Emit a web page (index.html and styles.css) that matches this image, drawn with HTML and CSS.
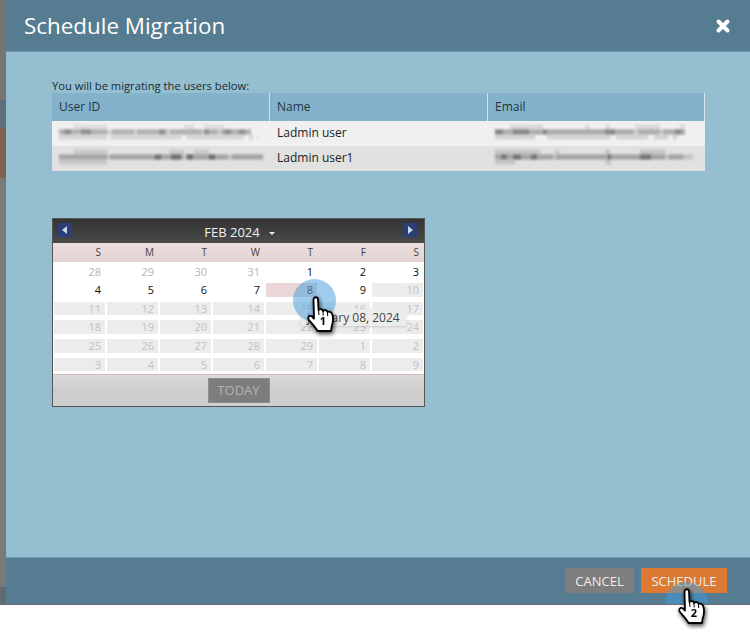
FILE: index.html
```html
<!DOCTYPE html>
<html lang="en">
<head>
  <meta charset="UTF-8" />
  <title>Schedule Migration</title>
  <link rel="stylesheet" href="styles.css">
</head>
<body>
  <div class="screen">

    <!-- Sliver of the page behind the modal -->
    <div class="behind">
      <div class="behind-a"></div>
      <div class="behind-b"></div>
      <div class="behind-c"></div>
      <div class="behind-d"></div>
      <div class="behind-e"></div>
    </div>

    <div class="dialog">
      <header class="dialog-head">
        <h1>Schedule Migration</h1>
        <svg class="close" width="16" height="16" viewBox="0 0 16 16">
          <path d="M3.5 3.5 L12.5 12.5 M12.5 3.5 L3.5 12.5" stroke="#fff" stroke-width="4" stroke-linecap="round"/>
        </svg>
      </header>

      <main class="dialog-body">
        <p class="intro">You will be migrating the users below:</p>

        <div class="users">
          <div class="users-head">User ID</div>
          <div class="users-head">Name</div>
          <div class="users-head">Email</div>

          <div class="users-cell odd">
            <svg class="mosaic" width="205" height="18" viewBox="0 0 205 18">
              <path d="M15 3H48M125 3H135M145 3H165" stroke="#dcdcdc" stroke-width="5"/>
              <path d="M0 8H192" stroke="#cfcfcf" stroke-width="5"/>
              <path d="M0 8H192" stroke="#b0b0b0" stroke-width="5" stroke-dasharray="48 5 22 3 30 3 32 4 12 3 30"/>
              <path d="M5 8H12M22 8H32M100 8H106M145 8H150M165 8H172M180 8H186" stroke="#8f8f8f" stroke-width="5"/>
              <path d="M0 13H200" stroke="#d6d6d6" stroke-width="5" stroke-dasharray="48 3 72 4 58 5 4 5 5"/>
            </svg>
          </div>
          <div class="users-cell odd">Ladmin user</div>
          <div class="users-cell odd">
            <svg class="mosaic" width="205" height="18" viewBox="0 0 205 18">
              <path d="M15 3H48M90 3H95M110 3H115M140 3H165M185 3H190" stroke="#d8d8d8" stroke-width="5"/>
              <path d="M0 8H190" stroke="#cccccc" stroke-width="5"/>
              <path d="M0 8H190" stroke="#acacac" stroke-width="5" stroke-dasharray="48 3 60 3 25 4 22 3 25"/>
              <path d="M0 8H8M18 8H34M48 8H52M110 8H120M180 8H186" stroke="#888" stroke-width="5"/>
              <path d="M0 13H205" stroke="#d2d2d2" stroke-width="5" stroke-dasharray="40 12 64 5 32 6 14 5 4"/>
            </svg>
          </div>

          <div class="users-cell even">
            <svg class="mosaic" width="205" height="18" viewBox="0 0 205 18">
              <path d="M15 3H48M110 3H125M135 3H150" stroke="#cacaca" stroke-width="5"/>
              <path d="M0 8H207" stroke="#c4c4c4" stroke-width="5"/>
              <path d="M0 8H207" stroke="#a4a4a4" stroke-width="5" stroke-dasharray="48 3 46 3 24 3 42 4 30"/>
              <path d="M96 8H102M112 8H122M128 8H134M150 8H156" stroke="#6f6f6f" stroke-width="5"/>
              <path d="M0 13H48" stroke="#c6c6c6" stroke-width="5"/>
            </svg>
          </div>
          <div class="users-cell even">Ladmin user1</div>
          <div class="users-cell even">
            <svg class="mosaic" width="205" height="18" viewBox="0 0 205 18">
              <path d="M0 3H45M60 3H64M110 3H115M145 3H170" stroke="#c4c4c4" stroke-width="5"/>
              <path d="M0 8H198" stroke="#c2c2c2" stroke-width="5"/>
              <path d="M0 8H198" stroke="#a4a4a4" stroke-width="5" stroke-dasharray="58 3 50 3 56 4 14"/>
              <path d="M6 8H12M18 8H26M36 8H42M112 8H116M145 8H156" stroke="#777" stroke-width="5"/>
              <path d="M0 13H20M110 13H116" stroke="#c4c4c4" stroke-width="5"/>
            </svg>
          </div>
        </div>

        <div class="calendar">
          <div class="cal-head">
            <span class="cal-nav"><svg width="6" height="8" viewBox="0 0 6 8"><path d="M5 0V8L0 4Z" fill="#cfd6e6"/></svg></span>
            <span class="cal-title">FEB 2024<i class="caret"></i></span>
            <span class="cal-nav"><svg width="6" height="8" viewBox="0 0 6 8"><path d="M1 0V8L6 4Z" fill="#cfd6e6"/></svg></span>
          </div>
          <div class="cal-days">
            <span>S</span><span>M</span><span>T</span><span>W</span><span>T</span><span>F</span><span>S</span>
          </div>
          <div class="cal-grid">
            <span class="past">28</span><span class="past">29</span><span class="past">30</span><span class="past">31</span><span>1</span><span>2</span><span>3</span>
            <span>4</span><span>5</span><span>6</span><span>7</span><span class="picked">8</span><span>9</span><span class="off">10</span>
            <span class="off">11</span><span class="off">12</span><span class="off">13</span><span class="off">14</span><span class="off">15</span><span class="off">16</span><span class="off">17</span>
            <span class="off">18</span><span class="off">19</span><span class="off">20</span><span class="off">21</span><span class="off">22</span><span class="off">23</span><span class="off">24</span>
            <span class="off">25</span><span class="off">26</span><span class="off">27</span><span class="off">28</span><span class="off">29</span><span class="off">1</span><span class="off">2</span>
            <span class="off">3</span><span class="off">4</span><span class="off">5</span><span class="off">6</span><span class="off">7</span><span class="off">8</span><span class="off">9</span>
          </div>
          <div class="cal-foot">
            <span class="today">TODAY</span>
          </div>
          <div class="cal-tip">January 08, 2024</div>
          <div class="pulse pulse-date"></div>
        </div>
      </main>

      <footer class="dialog-foot">
        <button class="btn btn-cancel">CANCEL</button>
        <button class="btn btn-schedule">SCHEDULE</button>
        <div class="pulse pulse-btn"></div>
      </footer>
    </div>

    <!-- Tutorial pointers, they sit over everything -->
    <div class="pointer pointer-date">
      <svg width="30" height="37" viewBox="0 0 30 37">
        <path class="hand" d="M6.5 3.5C6.5 .5 11 .5 11 3.5L11.5 14C13 12.5 15.5 13 16 15C17.5 13.5 20 14 20.5 16C22 15 25 16 25.5 19C26.5 23 26 27 24.5 31L24 35L10.5 35C9 32 6 29 2 24C0 21 2.5 19 5 20.5L7 22.5Z"/>
        <path class="hand-line" d="M11.5 14L12 19M16 15L16.2 19.5M20.5 16L20.7 20"/>
      </svg>
      <span>1</span>
    </div>
    <div class="pointer pointer-btn">
      <svg width="30" height="37" viewBox="0 0 30 37">
        <path class="hand" d="M6.5 3.5C6.5 .5 11 .5 11 3.5L11.5 14C13 12.5 15.5 13 16 15C17.5 13.5 20 14 20.5 16C22 15 25 16 25.5 19C26.5 23 26 27 24.5 31L24 35L10.5 35C9 32 6 29 2 24C0 21 2.5 19 5 20.5L7 22.5Z"/>
        <path class="hand-line" d="M11.5 14L12 19M16 15L16.2 19.5M20.5 16L20.7 20"/>
      </svg>
      <span>2</span>
    </div>
  </div>
</body>
</html>
```

FILE: styles.css
```css
* {
  box-sizing: border-box;
}
html, body {
  margin: 0;
  padding: 0;
  background-color: #ffffff;
  font-family: 'Open Sans', sans-serif;
}

/* the whole shot is a bit soft */
.screen {
  position: relative;
  width: 750px;
  height: 632px;
  overflow: hidden;
  filter: blur(0.35px);
}

/* ---- page behind the modal ---- */
.behind {
  position: absolute;
  inset: 0 auto auto 0;
  width: 6px;
  height: 605px;
  display: flex;
  flex-direction: column;
}
.behind-a { height: 100px; background-color: #757575; }
.behind-b { height: 28px; background-color: #5f6f7a; }
.behind-c { height: 50px; background-color: #80634f; }
.behind-d { flex: 1; background-color: #7a7a7a; }
.behind-e { height: 18px; background-color: #5f6b75; }

/* ---- modal ---- */
.dialog {
  margin-left: 6px;
  height: 605px;
  display: flex;
  flex-direction: column;
  background-color: #95bfd0;
  border-bottom: 1px solid #6b7075;
}

.dialog-head {
  height: 52px;
  padding: 0 19px 0 18px;
  display: flex;
  align-items: center;
  justify-content: space-between;
  background-color: #557c90;
  border-bottom: 1px solid #6f9bb0;
}
.dialog-head h1 {
  margin: 0;
  color: #ffffff;
  font-size: 22.4px;
  font-weight: 400;
}

.dialog-body {
  flex: 1;
  padding: 27px 45px 0 46px;
}
.intro {
  margin: 0;
  height: 14px;
  line-height: 14px;
  font-size: 11.2px;
  color: #1c2a30;
}

.users {
  display: grid;
  grid-template-columns: 218px 218px 217px;
  grid-auto-rows: 25px;
  grid-template-rows: 28px;
}
.users-head {
  display: flex;
  align-items: center;
  padding: 0 0 2px 7px;
  background-color: #84b2cb;
  border-right: 1px solid #d5e4ec;
  color: #1f3340;
  font-size: 12px;
}
.users-cell {
  display: flex;
  align-items: center;
  padding: 0 0 2px 7px;
  font-size: 12px;
  color: #222;
}
.users-cell.odd { background-color: #f0f0f0; }
.users-cell.even { background-color: #e1e1e1; }
.mosaic {
  filter: blur(0.9px);
}

/* ---- calendar ---- */
.calendar {
  position: relative;
  width: 373px;
  height: 189px;
  margin-top: 47px;
  background-color: #ffffff;
  border: 1px solid #555555;
}
.cal-head {
  height: 24px;
  padding: 4px 7px 0 5px;
  display: flex;
  justify-content: space-between;
  background: linear-gradient(#333333, #4a4a4a);
}
.cal-nav {
  width: 14px;
  height: 14px;
  display: flex;
  align-items: center;
  justify-content: center;
  background-color: #2b3f76;
}
.cal-title {
  color: #f0f0f0;
  font-size: 13px;
  line-height: 18px;
  padding-left: 4px;
}
.caret {
  display: inline-block;
  margin-left: 9px;
  vertical-align: 2px;
  border-top: 3px solid #eeeeee;
  border-left: 3px solid transparent;
  border-right: 3px solid transparent;
}
.cal-days,
.cal-grid {
  display: grid;
  grid-template-columns: repeat(7, 51px);
  column-gap: 2px;
  padding: 0 1px;
}
.cal-days {
  height: 19px;
  padding-bottom: 2px;
  align-items: center;
  background: linear-gradient(#eedfdf, #e2d2d2);
  color: #444;
  font-size: 10px;
}
.cal-days span {
  text-align: right;
  padding-right: 4px;
}
.cal-grid {
  height: 112px;
  padding-top: 2.5px;
  grid-auto-rows: 13.67px;
  row-gap: 5px;
  font-size: 11px;
  color: #111;
}
.cal-grid span {
  line-height: 14px;
  text-align: right;
  padding-right: 4px;
}
.cal-grid .past { color: #b5b5b5; }
.cal-grid .off { color: #c2c2c2; background-color: #ececec; }
.cal-grid .picked { color: #333; background-color: #ead6d6; }
.cal-foot {
  height: 32px;
  padding-top: 3px;
  display: flex;
  justify-content: center;
  background: linear-gradient(#d8d8d8, #d1d1d1 45%, #cdcdcd 46%, #cfcfcf);
  border-top: 1px solid #d9bcbc;
}
.today {
  width: 62px;
  height: 25px;
  line-height: 23px;
  text-align: center;
  background-color: #7d7d7d;
  border: 1px solid #8f8f8f;
  color: #b2b2b2;
  font-size: 13px;
}
.cal-tip {
  position: absolute;
  left: 248px;
  top: 90px;
  width: 105px;
  height: 17px;
  line-height: 17px;
  padding-left: 6px;
  background-color: rgba(236,236,236,0.92);
  box-shadow: 0 1px 3px rgba(0,0,0,0.15);
  border-radius: 2px;
  color: #444;
  font-size: 12px;
  white-space: nowrap;
}

/* ---- footer ---- */
.dialog-foot {
  position: relative;
  height: 47px;
  padding: 10px 23px 0 0;
  display: flex;
  justify-content: flex-end;
  gap: 7px;
  overflow: hidden;
  background-color: #557c90;
  border-top: 1px solid #6f9bb0;
}
.btn {
  height: 25px;
  padding: 0;
  border: 0;
  color: #eeeeee;
  font-family: inherit;
  font-size: 13px;
}
.btn-cancel {
  width: 69px;
  background-color: #7d7d7d;
}
.btn-schedule {
  width: 86px;
  background-color: #dc7a33;
}

/* ---- tutorial markers ---- */
.pulse {
  position: absolute;
  z-index: 1;
  width: 43px;
  height: 43px;
  border-radius: 50%;
  background-color: rgba(65,155,220,0.5);
}
.pulse-date {
  left: 240px;
  top: 60px;
}
.pulse-btn {
  left: 659px;
  top: 24px;
}
.pointer {
  position: absolute;
  z-index: 2;
  width: 30px;
  height: 37px;
  filter: drop-shadow(1px 2px 2px rgba(0,0,0,0.75));
}
.pointer span {
  position: absolute;
  left: 11px;
  top: 18px;
  width: 10px;
  text-align: center;
  font-size: 11px;
  font-weight: 700;
  color: #000;
  line-height: 14px;
}
.pointer-date {
  left: 307px;
  top: 296px;
}
.pointer-btn {
  left: 678px;
  top: 588px;
}
.hand {
  fill: #ffffff;
  stroke: #000000;
  stroke-width: 1.8;
  stroke-linejoin: round;
}
.hand-line {
  fill: none;
  stroke: #000000;
  stroke-width: 1;
}
```
